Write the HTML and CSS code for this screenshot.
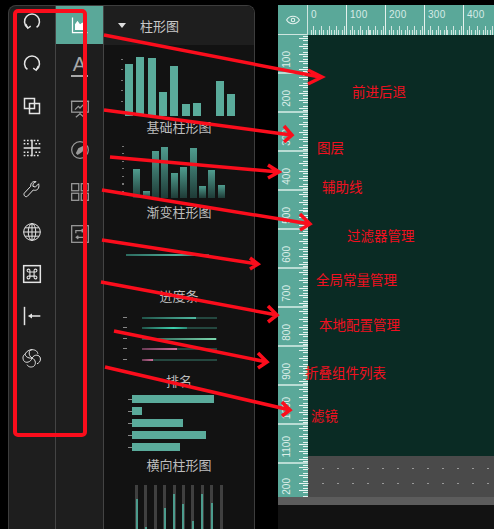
FILE: index.html
```html
<!DOCTYPE html>
<html lang="zh">
<head>
<meta charset="utf-8">
<title>编辑器</title>
<link rel="stylesheet" href="styles.css">
</head>
<body>
<div class="page">
  <aside class="panel">
    <nav class="tools">
      <svg class="tool" viewBox="0 0 24 24"><path d="M6.500 18.500A9 9 0 1 1 17.500 18.500"/><path d="M4.500 14.500l2.500 5 3.500-2.500" /></svg>
      <svg class="tool" viewBox="0 0 24 24"><path d="M6.500 18.500A9 9 0 1 1 17.500 18.500"/><path d="M19.500 14.500l-2.500 5-3.500-2.500"/></svg>
      <svg class="tool" viewBox="0 0 24 24"><rect x="3" y="3" width="12" height="12"/><rect x="9" y="9" width="12" height="12"/></svg>
      <svg class="tool" viewBox="0 0 24 24"><path d="M12 2v20M2 12h20"/><path class="dash" d="M2 3h20M2 7h6M16 7h6M2 17h6M16 17h6M2 21h20"/></svg>
      <svg class="tool thin" viewBox="0 0 24 24"><path d="M20 4.500l-4 4-3-1 .5-3.500 3.500-2c-3-1-7 1-6.500 5.500L3 15.500c-2 2 1 6 3.500 4l7-7.500c4 1.500 8-1.500 6.500-7.500z"/></svg>
      <svg class="tool thin" viewBox="0 0 24 24"><circle cx="12" cy="12" r="10"/><ellipse cx="12" cy="12" rx="4.500" ry="10"/><path d="M12 2v20M2 12h20M3.500 7h17M3.500 17h17"/></svg>
      <svg class="tool" viewBox="0 0 24 24"><rect x="2" y="2" width="20" height="20"/><path class="thinline" d="M9.500 9.500h5v5h-5zM9.500 9.500H8a1.700 1.700 0 1 1 1.500-1.500zM14.500 9.500V8A1.700 1.700 0 1 1 16 9.500zM9.500 14.500V16A1.700 1.700 0 1 1 8 14.500zM14.500 14.500H16a1.700 1.700 0 1 1-1.500 1.500z"/></svg>
      <svg class="tool" viewBox="0 0 24 24"><path d="M3 1v22"/><path d="M10 12h12"/><path class="fill" d="M7 12l5-3v6z"/></svg>
      <svg class="tool thin" viewBox="0 0 24 24"><path d="M12 12C7 9 8 2 12 2c5 0 7 3 7 5M12 12c3-5 9-4 10 0 1 4-2 6-4 7M12 12c5 2 5 8 2 10-4 2-7 0-8-2M12 12c-1 5-8 7-10 3-2-4 0-7 2-8M12 12C7 13 3 9 4 7c1-3 5-5 8-5"/></svg>
    </nav>
    <nav class="types">
      <div class="type type-active">
        <svg class="type-icon" viewBox="0 0 24 24"><path d="M3 3v18h18"/><path class="fill" d="M6 18V11l3-4 3 4 3-2 4 4v5z"/></svg>
      </div>
      <div class="type"><span class="type-a">A</span></div>
      <div class="type">
        <svg class="type-icon" viewBox="0 0 24 24"><rect x="2" y="4" width="20" height="13"/><path d="M1 4h22M12 17v2M7 23l5-4 5 4M6 14l4-4 2 2 5-5"/></svg>
      </div>
      <div class="type">
        <svg class="type-icon" viewBox="0 0 24 24"><circle cx="12" cy="12" r="10"/><path class="fill" d="M18 6l-3 8-6 4-2-2 3-6z"/></svg>
      </div>
      <div class="type">
        <svg class="type-icon" viewBox="0 0 24 24"><rect x="2" y="2" width="8.500" height="8.500"/><rect x="13.500" y="2" width="8.500" height="8.500"/><rect x="2" y="13.500" width="8.500" height="8.500"/><rect x="13.500" y="13.500" width="8.500" height="8.500"/></svg>
      </div>
      <div class="type">
        <svg class="type-icon" viewBox="0 0 24 24"><rect x="2" y="2" width="20" height="20"/><path d="M7 11V8h9M14 6l2.500 2-2.500 2M17 13v3H8M10 14l-2.500 2 2.500 2"/></svg>
      </div>
    </nav>
    <section class="gallery">
      <header class="gallery-head"><span class="caret"></span><span class="gallery-title">柱形图</span></header>
      <div class="gallery-list">
        <article class="item">
          <div class="chart bars">
            <i class="bar" style="height:52px"></i><i class="bar" style="height:59px"></i><i class="bar" style="height:58px"></i><i class="bar" style="height:24px"></i><i class="bar" style="height:50px"></i><i class="bar" style="height:12px"></i><i class="bar" style="height:13px"></i><i class="bar" style="height:0"></i><i class="bar" style="height:35px"></i><i class="bar" style="height:22px"></i>
          </div>
          <p class="caption">基础柱形图</p>
        </article>
        <article class="item">
          <div class="chart grads">
            <i class="grad" style="height:29px"></i><i class="grad" style="height:7px"></i><i class="grad" style="height:47px"></i><i class="grad" style="height:51px"></i><i class="grad" style="height:25px"></i><i class="grad" style="height:31px"></i><i class="grad" style="height:50px"></i><i class="grad" style="height:12px"></i><i class="grad" style="height:28px"></i><i class="grad" style="height:13px"></i>
          </div>
          <p class="caption">渐变柱形图</p>
        </article>
        <article class="item">
          <div class="chart single"><div class="single-line"></div></div>
          <p class="caption">进度条</p>
        </article>
        <article class="item">
          <div class="chart progress">
            <div class="track"><i class="fill-a" style="width:54px"></i></div>
            <div class="track"><i class="fill-b" style="width:45px"></i></div>
            <div class="track"><i class="fill-c" style="width:74px"></i></div>
            <div class="track"><i class="fill-d" style="width:35px"></i></div>
            <div class="track"><i class="fill-d" style="width:11px"></i></div>
          </div>
          <p class="caption">排名</p>
        </article>
        <article class="item">
          <div class="chart hbars">
            <i class="hbar" style="width:82px"></i><i class="hbar" style="width:10px"></i><i class="hbar" style="width:51px"></i><i class="hbar" style="width:74px"></i><i class="hbar" style="width:48px"></i>
          </div>
          <p class="caption">横向柱形图</p>
        </article>
        <article class="item">
          <div class="chart vtracks">
            <div class="vtrack"><i style="height:56px"></i></div><div class="vtrack"><i style="height:28px"></i></div><div class="vtrack"></div><div class="vtrack"><i style="height:47px"></i></div><div class="vtrack"><i style="height:61px"></i></div><div class="vtrack"><i style="height:51px"></i></div><div class="vtrack"><i style="height:34px"></i></div><div class="vtrack"><i style="height:61px"></i></div><div class="vtrack"><i style="height:52px"></i></div><div class="vtrack"><i style="height:26px"></i></div>
          </div>
        </article>
      </div>
    </section>
  </aside>
  <main class="work">
    <div class="top-row">
      <div class="corner">
        <svg class="eye" viewBox="0 0 24 16"><path d="M1 8c5-8.500 17-8.500 22 0-5 8.500-17 8.500-22 0z"/><circle cx="12" cy="8" r="3"/></svg>
      </div>
      <div class="h-ruler">
        <div class="h-seg">0</div><div class="h-seg">100</div><div class="h-seg">200</div><div class="h-seg">300</div><div class="h-seg">400</div>
      </div>
    </div>
    <div class="mid-row">
      <div class="v-ruler">
        <div class="v-seg"><span>100</span></div><div class="v-seg"><span>200</span></div><div class="v-seg"><span>300</span></div><div class="v-seg"><span>400</span></div><div class="v-seg"><span>500</span></div><div class="v-seg"><span>600</span></div><div class="v-seg"><span>700</span></div><div class="v-seg"><span>800</span></div><div class="v-seg"><span>900</span></div><div class="v-seg"><span>1000</span></div><div class="v-seg"><span>1100</span></div><div class="v-seg v-last"><span>200</span></div>
      </div>
      <div class="stage">
        <div class="canvas"></div>
        <div class="dots"></div>
      </div>
    </div>
    <div class="strip"></div>
    <div class="under"></div>
  </main>
</div>
<svg class="marks" viewBox="0 0 494 529">
  <rect x="15" y="11" width="70" height="424" rx="3"/>
  <path d="M104 35L320 77M308 70l14 7-14 7"/>
  <path d="M104 110L291 135M284 126l8 9-8 7"/>
  <path d="M110 157L279 172M268 165l11 7-11 6"/>
  <path d="M102 190L310 224M300 214l10 10-10 6"/>
  <path d="M102 240L258 264M250 258l8 6-8 5"/>
  <path d="M101 282L277 315M268 306l9 9-9 7"/>
  <path d="M114 331L267 362M258 353l9 9-9 6"/>
  <path d="M105 367L290 410M282 402l8 8-8 6"/>
</svg>
<span class="note note-1">前进后退</span>
<span class="note note-2">图层</span>
<span class="note note-3">辅助线</span>
<span class="note note-4">过滤器管理</span>
<span class="note note-5">全局常量管理</span>
<span class="note note-6">本地配置管理</span>
<span class="note note-7">折叠组件列表</span>
<span class="note note-8">滤镜</span>
</body>
</html>
```
FILE: styles.css
```css
* { box-sizing: border-box; }
html, body { margin: 0; height: 529px; overflow: hidden; background: #000; }
body { position: relative; font-family: "Noto Sans CJK SC", "Liberation Sans", sans-serif; }
.page { display: flex; gap: 23px; height: 529px; padding: 5px 0 0 8px; }

.panel { display: flex; width: 247px; flex: none; height: 524px; background: #1e1e1e; border: 1px solid #3d3d3d; border-bottom: 0; border-radius: 8px 8px 0 0; overflow: hidden; }
.tools { display: flex; flex-direction: column; align-items: center; width: 47px; flex: none; border-right: 1px solid #444; padding-top: 6px; }
.tool { width: 20px; height: 20px; margin-bottom: 22px; fill: none; stroke: #e4e4e4; stroke-width: 1.800; flex: none; }
.tool.thin { stroke-width: 1.200; }
.tool .dash { stroke-dasharray: 2 2; }
.tool .thinline { stroke-width: 1.300; }
.tool .fill { fill: #e4e4e4; stroke: none; }

.types { display: flex; flex-direction: column; width: 48px; flex: none; border-right: 1px solid #444; }
.type { display: flex; justify-content: center; align-items: center; height: 42px; flex: none; }
.type-active { height: 38px; background: #5aa899; }
.type:nth-child(2) { height: 43px; }
.type-icon { width: 20px; height: 20px; fill: none; stroke: #9a9a9a; stroke-width: 1.500; }
.type-active .type-icon { stroke: #fff; }
.type-icon .fill { fill: #9a9a9a; stroke: none; }
.type-active .type-icon .fill { fill: #fff; }
.type-a { font: 400 20px/21px "Liberation Sans", sans-serif; color: #a8a8a8; border-bottom: 2px solid #a8a8a8; padding: 0 2px; }

.gallery { display: flex; flex-direction: column; flex: 1; min-width: 0; background: #121212; }
.gallery-head { display: flex; align-items: center; gap: 14px; height: 39px; flex: none; padding-left: 14px; background: #1e1e1e; }
.caret { width: 0; height: 0; border-left: 4.500px solid transparent; border-right: 4.500px solid transparent; border-top: 5px solid #ddd; }
.gallery-title { font-size: 13px; color: #c8c8c8; }
.gallery-list { display: flex; flex-direction: column; padding-top: 8px; overflow: hidden; flex: 1; }
.item { flex: none; height: 84.500px; }
.chart { height: 64px; }
.caption { margin: 0; height: 20px; font-size: 13px; line-height: 20px; text-align: center; color: #bdbdbd; }

.bars { display: flex; justify-content: center; align-items: flex-end; gap: 3.300px; padding: 0 0 1px 2px;
  background: repeating-linear-gradient(180deg, #777 0 1px, transparent 1px 10.500px) 17px 6px / 2px 50px no-repeat; }
.bar { width: 8px; background: #5aab9b; }
.grads { display: flex; justify-content: center; align-items: flex-end; gap: 2.400px; padding-bottom: 4px;
  background: repeating-linear-gradient(180deg, #777 0 1px, transparent 1px 7.500px) 18px 8px / 2px 50px no-repeat; }
.grad { width: 7px; background: linear-gradient(#4f9c8e, #1f3b37); }
.single { padding: 32px 0 0 22px; }
.single-line { width: 83px; height: 2px; background: linear-gradient(90deg, #2c6b5f, #4fae9a 60%, #2c6b5f); }
.progress { display: flex; flex-direction: column; gap: 8.500px; padding: 10px 0 0 38px;
  background: repeating-linear-gradient(180deg, #888 0 1px, transparent 1px 10.500px) 19px 10px / 4px 50px no-repeat; }
.track { width: 75px; height: 2px; background: #24473f; }
.track i { display: block; height: 2px; }
.fill-a { background: linear-gradient(90deg, #21544a, #4fb9a1); }
.fill-b { background: linear-gradient(90deg, #21544a, #3ed0ae 70%, #2a8a76); }
.fill-c { background: linear-gradient(90deg, #21544a, #7bd6ad); }
.fill-d { background: linear-gradient(90deg, #6b3b55, #cf6f9c); }
.hbars { display: flex; flex-direction: column; gap: 4px; padding: 4px 0 0 28px;
  background: repeating-linear-gradient(180deg, #888 0 1px, transparent 1px 12px) 24px 8px / 4px 50px no-repeat; }
.hbar { display: block; height: 8px; background: #5aab9b; }
.vtracks { display: flex; align-items: flex-start; gap: 6.400px; height: 70px; padding: 9px 0 0 31px; }
.vtrack { display: flex; align-items: flex-end; justify-content: center; width: 3px; height: 70px; background: #404040; flex: none; }
.vtrack i { display: block; width: 2px; background: #4c9c8d; }

.work { display: flex; flex-direction: column; flex: 1; min-width: 0; }
.top-row { display: flex; height: 30px; flex: none; }
.corner { display: flex; align-items: center; justify-content: center; width: 30px; flex: none; background: #5aa899; border-right: 1px solid #cfe5df; border-bottom: 1px solid #cfe5df; }
.eye { width: 14px; height: 10px; fill: none; stroke: #e6f2ef; stroke-width: 1.800; }
.h-ruler { display: flex; flex: 1; overflow: hidden; background: #5aa899; }
.h-seg { width: 39px; flex: none; padding: 2px 0 0 3px; border-right: 1px solid #e4f1ed; font: 10px/15px "Liberation Sans", sans-serif; letter-spacing: .3px; color: #d6ebe6;
  background:
    repeating-linear-gradient(90deg, #cfe5df 0 1px, transparent 1px 3.900px) 3px 100% / 100% 5px no-repeat,
    repeating-linear-gradient(90deg, #cfe5df 0 1px, transparent 1px 7.800px) 5px 100% / 100% 9px no-repeat; }
.mid-row { display: flex; height: 462px; flex: none; }
.v-ruler { display: flex; flex-direction: column; width: 30px; flex: none; background: #5aa899; overflow: hidden; }
.v-seg { display: flex; height: 39px; flex: none; justify-content: flex-start; align-items: flex-end; padding: 0 0 4px 3px; border-bottom: 2px solid #b9dcd4; font: 10px/12px "Liberation Sans", sans-serif; color: #dceee9;
  background:
    repeating-linear-gradient(180deg, #e8f4f1 0 1px, transparent 1px 3.900px) 100% 1px / 5px 100% no-repeat,
    repeating-linear-gradient(180deg, #e8f4f1 0 1px, transparent 1px 7.800px) 100% 3px / 9px 100% no-repeat; }
.v-seg span { writing-mode: vertical-rl; transform: rotate(180deg); }
.v-last { height: 33px; border-bottom: 0; padding-bottom: 2px; }
.stage { display: flex; flex-direction: column; flex: 1; min-width: 0; }
.canvas { height: 421px; flex: none; background: #0a2b24; }
.dots { height: 41px; flex: none; background-color: #4a4a4a; background-image: radial-gradient(circle, #e8e8e8 0 .7px, transparent 1px); background-size: 15px 15px; background-position: -7.500px 5px; }
.strip { height: 8px; flex: none; background: #5c5c5c; }
.under { flex: 1; background: #121212; }

.marks { position: absolute; left: 0; top: 0; width: 494px; height: 529px; fill: none; stroke: #fb0d1c; stroke-width: 3.500; }
.marks rect { stroke-width: 4; }
.note { position: absolute; font-size: 13.500px; line-height: 18px; color: #f01020; white-space: nowrap; }
.note-1 { left: 352px; top: 82px; }
.note-2 { left: 317px; top: 138px; }
.note-3 { left: 322px; top: 177px; }
.note-4 { left: 347px; top: 226px; }
.note-5 { left: 316px; top: 270px; }
.note-6 { left: 319px; top: 315px; }
.note-7 { left: 305px; top: 363px; }
.note-8 { left: 311px; top: 406px; }
```
